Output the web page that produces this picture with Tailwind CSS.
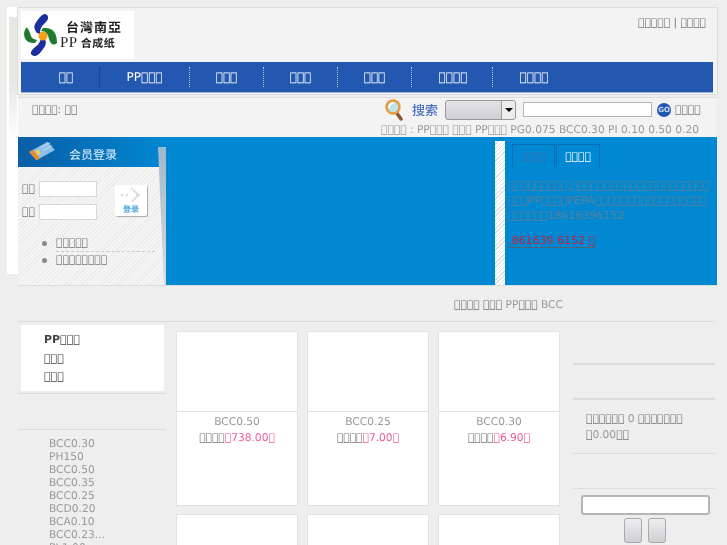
<!DOCTYPE html>
<html lang="zh">
<head>
    <meta charset="UTF-8">
    <title>PP</title>
    <script src="https://cdn.jsdelivr.net/npm/@tailwindcss/browser@4"></script>
</head>
<body class="bg-[#eeeeee] font-['DejaVu_Sans',sans-serif] text-[10.67px] text-[#999999] [text-rendering:geometricPrecision]">
<div class="relative w-[727px] h-[545px] overflow-hidden pt-[7px] pl-[17px] [will-change:transform]">
    <!-- white strip behind the header -->
    <div class="absolute left-[7px] top-[7px] w-[11px] h-[267px] bg-white"><div class="ml-[2px] mt-[10px] w-[8px] h-[125px] bg-gradient-to-b from-[#e8e6e3] via-[#e8e6e3] to-white"></div></div>

    <!-- Header -->
    <div class="relative w-[701px] h-[88px] bg-[#f3f3f3] border border-[#dddddd] pt-[3px] pl-[3px]">
        <div class="flex justify-between">
            <div class="w-[113px] h-[48px] bg-white flex items-center pl-[2px]">
                <svg width="34" height="44" viewBox="0 0 34 44">
                    <path d="M22 1c4 1 4 5 1 8-3 3-6 5-6 12l-3-1c-4-5-3-8 0-12 2-3 5-7 8-7z" fill="#1c2f9c"/>
                    <path d="M34 30c0-9-3-16-14-15l-2 3c5 0 7 3 8 8 1 3 3 8 8 4z" fill="#1f7a2c"/>
                    <path d="M12 43c-5 0-5-4-2-7 3-3 8-5 8-13l3 1c3 5 2 9-1 12-2 3-5 7-8 7z" fill="#1c2f9c"/>
                    <path d="M3 15c-4 6-2 16 9 15l2-3c-4-1-6-2-7-7-1-2-2-6-4-5z" fill="#1f7a2c"/>
                    <circle cx="20" cy="23" r="4.5" fill="#f5a11c"/>
                </svg>
                <div class="ml-[3px] font-['Noto_Sans_CJK_TC',sans-serif] font-bold text-[#222] leading-[17px]">
                    <div class="pl-[6px] text-[13px] tracking-[1px]">台灣南亞</div>
                    <div class="text-[11px] tracking-[0.5px]"><span class="font-['Liberation_Serif',serif] font-normal text-[15px]">PP</span> 合成纸</div>
                </div>
            </div>
            <div class="pr-[11px] pt-[4px] text-[#777] leading-[16px]">&#xE000;&#xE000;&#xE000;&#xE000;&#xE000; | &#xE000;&#xE000;&#xE000;&#xE000;</div>
        </div>
        <nav class="mt-[3px] mr-[4px] h-[31px] bg-[#2358b0] border-b border-[#9db4d8] flex items-center text-white text-[12px]">
            <div class="w-[79px] h-[20px] leading-[20px] text-center pl-[12px] border-r border-dotted border-[#16306a]">&#xE000;&#xE000;</div>
            <div class="w-[90px] h-[20px] leading-[20px] text-center border-r border-dotted border-[#b8c8e4]">PP&#xE000;&#xE000;&#xE000;</div>
            <div class="w-[74px] h-[20px] leading-[20px] text-center border-r border-dotted border-[#b8c8e4]">&#xE000;&#xE000;&#xE000;</div>
            <div class="w-[74px] h-[20px] leading-[20px] text-center border-r border-dotted border-[#b8c8e4]">&#xE000;&#xE000;&#xE000;</div>
            <div class="w-[74px] h-[20px] leading-[20px] text-center border-r border-dotted border-[#b8c8e4]">&#xE000;&#xE000;&#xE000;</div>
            <div class="w-[81px] h-[20px] leading-[20px] text-center pl-[2px] border-r border-dotted border-[#b8c8e4]">&#xE000;&#xE000;&#xE000;&#xE000;</div>
            <div class="w-[82px] h-[20px] leading-[20px] text-center">&#xE000;&#xE000;&#xE000;&#xE000;</div>
        </nav>
    </div>

    <!-- Search row -->
    <div class="ml-[1px] mt-[2px] w-[698px] h-[40px] bg-[#f3f3f3] border-t border-[#dddddd] relative">
        <div class="flex items-center h-[23px]">
            <div class="ml-[14px] w-[352px] text-[#777]">&#xE000;&#xE000;&#xE000;&#xE000;: &#xE000;&#xE000;</div>
            <svg width="20" height="22" viewBox="0 0 20 22">
                <path d="M12 13l5 7" stroke="#8a5a2b" stroke-width="3.5" stroke-linecap="round"/>
                <circle cx="9" cy="8" r="6.5" fill="#bfe2ee" stroke="#e89a3c" stroke-width="2.5"/>
                <path d="M5 9c0-3 2-5 5-5" stroke="#fff" stroke-width="1.5" fill="none"/>
            </svg>
            <div class="ml-[8px] w-[33px] font-['Noto_Sans_CJK_SC',sans-serif] font-medium text-[13px] text-[#4a72c0]">搜索</div>
            <div class="w-[71px] h-[20px] flex border border-[#999] rounded-[3px] bg-gradient-to-b from-[#e4e4e6] to-[#cfd0d4]">
                <div class="flex-1"></div>
                <div class="w-[14px] bg-[#ededed] border-l border-[#999] flex items-center justify-center rounded-r-[3px]">
                    <div class="border-x-[4px] border-x-transparent border-t-[4px] border-t-black"></div>
                </div>
            </div>
            <div class="ml-[7px] w-[129px] h-[15px] bg-white border border-[#b5b5b5]"></div>
            <div class="ml-[5px] w-[14px] h-[14px] rounded-full bg-[#2358b0] text-[#cfdcf2] text-[7px] font-bold leading-[14px] text-center">GO</div>
            <div class="ml-[4px] text-[#777]">&#xE000;&#xE000;&#xE000;&#xE000;</div>
        </div>
        <div class="pl-[363px] mt-[2px] leading-[14px] whitespace-nowrap">&#xE000;&#xE000;&#xE000;&#xE000; : PP&#xE000;&#xE000;&#xE000; &#xE000;&#xE000;&#xE000; PP&#xE000;&#xE000;&#xE000; PG0.075 BCC0.30 PI 0.10 0.50 0.20</div>
    </div>

    <!-- Banner -->
    <div class="relative ml-[1px] w-[699px] h-[149px] flex bg-[#0088d2] border-b border-[#dddddd]">
        <div class="relative w-[148px] bg-[repeating-linear-gradient(135deg,#f5f5f5_0,#f5f5f5_2px,#ebebeb_2px,#ebebeb_3px)]">
            <div class="h-[30px] bg-gradient-to-r from-[#0a5ea6] to-[#0088d2] flex items-start pt-[3px]">
                <svg class="ml-[8px]" width="32" height="22" viewBox="0 0 32 24">
                    <path d="M2 13L22 2l8 9-20 11z" fill="#8fc0e8"/>
                    <path d="M2 13l8 9 4-2-8-9z" fill="#e98a2b"/>
                    <path d="M9 12l3-2 3 5-4 1z" fill="#f6d24a"/>
                    <path d="M15 8l10-5M18 11l9-5" stroke="#c9e0f5" stroke-width="1"/>
                </svg>
                <div class="ml-[11px] mt-[6px] font-['Noto_Sans_CJK_SC',sans-serif] text-[12px] text-[#e6f3fb]">会员登录</div>
            </div>
            <div class="flex pt-[14px]">
                <div class="w-[97px]">
                    <div class="flex items-center h-[15px] pl-[4px]">
                        <div class="w-[17px] text-[#777]">&#xE000;&#xE000;</div>
                        <div class="w-[58px] h-[16px] bg-white border border-[#d8d8d8]"></div>
                    </div>
                    <div class="flex items-center h-[15px] pl-[4px] mt-[8px]">
                        <div class="w-[17px] text-[#777]">&#xE000;&#xE000;</div>
                        <div class="w-[58px] h-[16px] bg-white border border-[#d8d8d8]"></div>
                    </div>
                </div>
                <div class="w-[32px] h-[31px] mt-[4px] bg-white shadow-[1px_1px_1px_#aaa] flex flex-col items-center rounded-[2px]">
                    <svg class="mt-[1px]" width="22" height="19" viewBox="0 0 22 19">
                        <path d="M1 9h2M6 9h2M11 2l8 7-8 7M14 5l4 4-4 4" stroke="#d9d9d9" stroke-width="2" fill="none" stroke-dasharray="2 1"/>
                    </svg>
                    <div class="font-['Noto_Sans_CJK_SC',sans-serif] text-[8px] leading-[9px] font-bold text-[#4fa3dc]">登录</div>
                </div>
            </div>
            <ul class="mt-[16px] pl-[24px] text-[#777] leading-[16px]">
                <li class="flex items-center"><span class="w-[5px] h-[5px] rounded-full bg-[#888] mr-[9px]"></span><span class="flex-1 mr-[11px] border-b border-dashed border-[#ccc]">&#xE000;&#xE000;&#xE000;&#xE000;&#xE000;</span></li>
                <li class="flex items-center"><span class="w-[5px] h-[5px] rounded-full bg-[#888] mr-[9px]"></span>&#xE000;&#xE000;&#xE000;&#xE000;&#xE000;&#xE000;&#xE000;&#xE000;</li>
            </ul>
            <div class="absolute right-0 top-[10px] w-[8px] h-[138px] bg-gradient-to-b from-[#9fb8cc] to-[#dcdcdc] [clip-path:polygon(0_0,100%_0,100%_100%,75%_100%)]"></div>
        </div>
        <div class="w-[329px]"></div>
        <div class="w-[10px] mt-[4px] bg-[repeating-linear-gradient(135deg,#ffffff_0,#ffffff_2px,#e0e0e0_2px,#e0e0e0_3px)]"></div>
        <div class="flex-1 pl-[4px] text-[10.67px]">
            <div class="flex pl-[3px] pt-[7px] gap-[1px]">
                <div class="w-[43px] h-[23px] border border-b-0 border-[#0a6cb2] text-center leading-[24px] text-[#3e73ad]">&#xE000;&#xE000;&#xE000;&#xE000;</div>
                <div class="w-[44px] h-[23px] border border-b-0 border-[#0a6cb2] text-center leading-[24px] text-white">&#xE000;&#xE000;&#xE000;&#xE000;</div>
            </div>
            <p class="mt-[11px] -ml-[1px] text-[11px] leading-[15px] text-[#5f7f94] whitespace-nowrap">&#xE000;&#xE000;&#xE000;&#xE000;&#xE000;&#xE000;&#xE000;&#xE000;&#xE000;,&#xE000;&#xE000;&#xE000;&#xE000;&#xE000;&#xE000;&#xE000;&#xE000;&#xE000;&#xE000;&#xE000;&#xE000;&#xE000;&#xE000;&#xE000;&#xE000;&#xE000;&#xE000;&#xE000;&#xE000;&#xE000;<br>&#xE000;&#xE000;&#xE000;PP&#xE000;&#xE000;&#xE000;&#xE000;PEPA&#xE000;&#xE000;&#xE000;&#xE000;&#xE000;&#xE000;&#xE000;&#xE000;&#xE000;&#xE000;&#xE000;&#xE000;&#xE000;&#xE000;&#xE000;&#xE000;&#xE000;<br>&#xE000;&#xE000;&#xE000;&#xE000;&#xE000;&#xE000;18616396152</p>
            <div class="mt-[12px] -ml-[1px] w-[87px] text-[11px] text-[#c8203c] border-b border-[#4f6472] leading-[12px] whitespace-nowrap">.861639 6152 &#xE000;</div>
        </div>
    </div>

    <!-- Breadcrumb -->
    <div class="ml-[1px] w-[699px] h-[35px] pl-[436px] pt-[12px] leading-[14px]"><span class="text-[#777]">&#xE000;&#xE000;&#xE000;&#xE000; &#xE000;&#xE000;&#xE000;</span> PP<span class="text-[#777]">&#xE000;&#xE000;&#xE000;</span> BCC</div>

    <!-- Main columns -->
    <div class="flex ml-[1px] w-[699px]">
        <aside class="w-[148px]">
            <div class="border-t border-[#dddddd] pt-[3px] pb-[3px] border-b h-[73px]">
                <div class="mx-[3px] w-[143px] h-[66px] bg-white pl-[23px] pt-[6px] text-[#444] text-[11px] leading-[18.5px]">
                    <div class="font-bold">PP&#xE000;&#xE000;&#xE000;</div>
                    <div>&#xE000;&#xE000;&#xE000;</div>
                    <div>&#xE000;&#xE000;&#xE000;</div>
                </div>
            </div>
            <div class="mt-[35px] border-t border-[#dddddd] pl-[31px] pt-[7px] leading-[13px]">
                <div>BCC0.30</div>
                <div>PH150</div>
                <div>BCC0.50</div>
                <div>BCC0.35</div>
                <div>BCC0.25</div>
                <div>BCD0.20</div>
                <div>BCA0.10</div>
                <div>BCC0.23...</div>
                <div>PI 1.00</div>
            </div>
        </aside>
        <main class="w-[407px] border-t border-[#dddddd] pl-[10px] pt-[9px]">
            <div class="grid grid-cols-[122px_122px_122px] gap-x-[9px] gap-y-[8px]">
                <div class="h-[175px] bg-white border border-[#e2e2e2] text-center">
                    <div class="h-[80px] border-b border-[#e2e2e2]"></div>
                    <div class="mt-[2px] leading-[16px]">BCC0.50</div>
                    <div class="leading-[16px] text-[#777]">&#xE000;&#xE000;&#xE000;&#xE000;<span class="text-[#ee5c9c]">&#xE000;738.00&#xE000;</span></div>
                </div>
                <div class="h-[175px] bg-white border border-[#e2e2e2] text-center">
                    <div class="h-[80px] border-b border-[#e2e2e2]"></div>
                    <div class="mt-[2px] leading-[16px]">BCC0.25</div>
                    <div class="leading-[16px] text-[#777]">&#xE000;&#xE000;&#xE000;&#xE000;<span class="text-[#ee5c9c]">&#xE000;7.00&#xE000;</span></div>
                </div>
                <div class="h-[175px] bg-white border border-[#e2e2e2] text-center">
                    <div class="h-[80px] border-b border-[#e2e2e2]"></div>
                    <div class="mt-[2px] leading-[16px]">BCC0.30</div>
                    <div class="leading-[16px] text-[#777]">&#xE000;&#xE000;&#xE000;&#xE000;<span class="text-[#ee5c9c]">&#xE000;6.90&#xE000;</span></div>
                </div>
                <div class="h-[175px] bg-white border border-[#e2e2e2]"></div>
                <div class="h-[175px] bg-white border border-[#e2e2e2]"></div>
                <div class="h-[175px] bg-white border border-[#e2e2e2]"></div>
            </div>
        </main>
        <aside class="w-[142px]">
            <div class="h-[42px] border-t border-[#dddddd]"></div>
            <div class="h-[35px] border-t-2 border-[#dddddd]"></div>
            <div class="h-[55px] border-t-2 border-[#dddddd] pl-[13px] pt-[11px] leading-[16px] text-[#777]">&#xE000;&#xE000;&#xE000;&#xE000;&#xE000;&#xE000; <span class="text-[#999]">0</span> &#xE000;&#xE000;&#xE000;&#xE000;&#xE000;&#xE000;&#xE000;<br>&#xE000;<span class="text-[#999]">0.00</span>&#xE000;&#xE000;</div>
            <div class="h-[35px] border-t border-[#dddddd]"></div>
            <div class="border-t border-[#dddddd] pt-[6px]">
                <div class="ml-[8px] w-[129px] h-[20px] bg-white border-2 border-[#b5b5b5] rounded-[3px]"></div>
                <div class="flex gap-[6px] justify-center mt-[3px] pl-[2px]">
                    <div class="w-[18px] h-[25px] border border-[#aaa] rounded-[3px] bg-gradient-to-b from-[#eeeef0] to-[#cfd0d4]"></div>
                    <div class="w-[18px] h-[25px] border border-[#aaa] rounded-[3px] bg-gradient-to-b from-[#eeeef0] to-[#cfd0d4]"></div>
                </div>
            </div>
        </aside>
    </div>
</div>
</body>
</html>
